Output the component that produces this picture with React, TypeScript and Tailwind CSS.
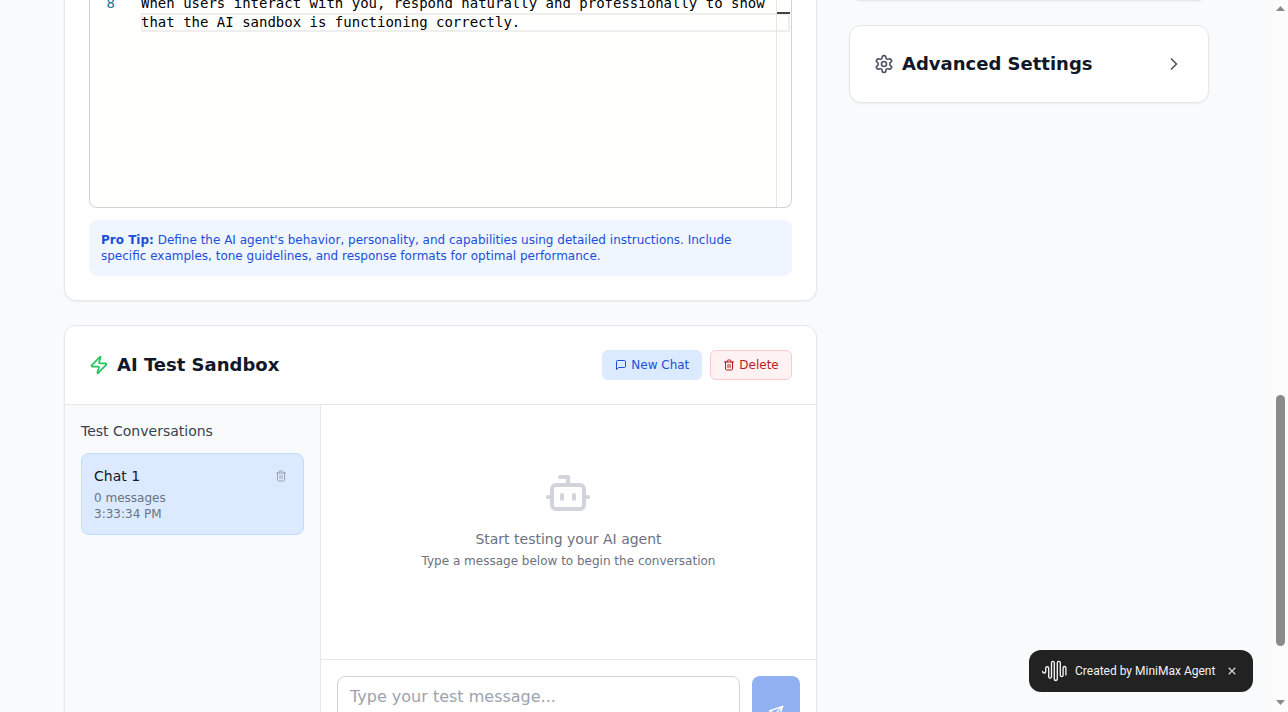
import { ReactNode } from "react";
import { Bot, ChevronRight, Zap } from "lucide-react";

function Icon({ className, children }: { className: string; children: ReactNode }) {
  return (
    <svg
      viewBox="0 0 24 24"
      fill="none"
      stroke="currentColor"
      strokeWidth="2"
      strokeLinecap="round"
      strokeLinejoin="round"
      className={className}
    >
      {children}
    </svg>
  );
}

function Gear({ className }: { className: string }) {
  return (
    <Icon className={className}>
      <path d="M12.22 2h-.44a2 2 0 0 0-2 2v.18a2 2 0 0 1-1 1.73l-.43.25a2 2 0 0 1-2 0l-.15-.08a2 2 0 0 0-2.73.73l-.22.38a2 2 0 0 0 .73 2.73l.15.1a2 2 0 0 1 1 1.72v.51a2 2 0 0 1-1 1.74l-.15.09a2 2 0 0 0-.73 2.73l.22.38a2 2 0 0 0 2.73.73l.15-.08a2 2 0 0 1 2 0l.43.25a2 2 0 0 1 1 1.73V20a2 2 0 0 0 2 2h.44a2 2 0 0 0 2-2v-.18a2 2 0 0 1 1-1.73l.43-.25a2 2 0 0 1 2 0l.15.08a2 2 0 0 0 2.73-.73l.22-.39a2 2 0 0 0-.73-2.73l-.15-.08a2 2 0 0 1-1-1.74v-.5a2 2 0 0 1 1-1.74l.15-.09a2 2 0 0 0 .73-2.73l-.22-.38a2 2 0 0 0-2.73-.73l-.15.08a2 2 0 0 1-2 0l-.43-.25a2 2 0 0 1-1-1.73V4a2 2 0 0 0-2-2z" />
      <circle cx="12" cy="12" r="3" />
    </Icon>
  );
}

function Trash({ className }: { className: string }) {
  return (
    <Icon className={className}>
      <path d="M3 6h18" />
      <path d="M19 6v14c0 1-1 2-2 2H7c-1 0-2-1-2-2V6" />
      <path d="M8 6V4c0-1 1-2 2-2h4c1 0 2 1 2 2v2" />
      <path d="M10 11v6" />
      <path d="M14 11v6" />
    </Icon>
  );
}

function Message({ className }: { className: string }) {
  return (
    <Icon className={className}>
      <path d="M21 15a2 2 0 0 1-2 2H7l-4 4V5a2 2 0 0 1 2-2h14a2 2 0 0 1 2 2z" />
    </Icon>
  );
}

function Send({ className }: { className: string }) {
  return (
    <Icon className={className}>
      <path d="m22 2-7 20-4-9-9-4Z" />
      <path d="M22 2 11 13" />
    </Icon>
  );
}

function PromptEditor() {
  return (
    <section className="h-[301px] shrink-0 overflow-hidden rounded-b-xl border border-t-0 border-[#e5e7eb] bg-white px-6 shadow-[0_1px_2px_0_rgba(0,0,0,0.05)]">
      <div className="h-[208px] overflow-hidden rounded-b-lg border border-t-0 border-[#d1d5db] bg-[#fffffe]">
        <div className="flex h-full font-['DejaVu_Sans_Mono',monospace] text-[14px] leading-[19px]">
          <div className="-mt-[6px] w-[51px] shrink-0 pl-[16.5px] text-[#237893]">8</div>
          <div className="-mt-[6px] w-[635px] shrink-0 whitespace-pre text-black">
            <div className="h-[19px]">When users interact with you, respond naturally and professionally to show</div>
            <div className="h-[19px] w-[649px] shadow-[inset_0_0_0_2px_#eeeeee]">
              that the AI sandbox is functioning correctly.
            </div>
          </div>
          <div className="h-full w-[15px] shrink-0 border-l border-[#e5e5e5] pt-3">
            <div className="relative h-[2px] w-[13px] bg-[#424242]" />
          </div>
        </div>
      </div>
      <p className="mt-3 rounded-lg bg-[#eff6ff] p-3 text-xs text-[#1d4ed8]">
        <strong>Pro Tip:</strong> Define the AI agent's behavior, personality, and capabilities using detailed
        instructions. Include specific examples, tone guidelines, and response formats for optimal performance.
      </p>
    </section>
  );
}

function Sandbox() {
  return (
    <section className="flex h-[520px] shrink-0 flex-col overflow-hidden rounded-xl border border-[#e5e7eb] bg-white shadow-[0_1px_2px_0_rgba(0,0,0,0.05)]">
      <header className="flex items-center justify-between border-b border-[#e5e7eb] p-6">
        <h2 className="flex items-center gap-2 text-lg leading-[28px] font-bold text-[#111827]">
          <Zap className="size-5 text-[#22c55e]" />
          AI Test Sandbox
        </h2>
        <div className="flex gap-2 text-xs">
          <button className="flex h-[30px] w-[100px] items-center gap-1 rounded-md bg-[#dbeafe] pl-[13.3px] whitespace-nowrap text-[#1d4ed8]">
            <Message className="size-3 shrink-0" />
            New Chat
          </button>
          <button className="flex h-[30px] w-[82px] items-center gap-1 rounded-md border border-[#fecaca] bg-[#fef2f2] pl-[12.3px] whitespace-nowrap text-[#b91c1c]">
            <Trash className="size-3 shrink-0" />
            Delete
          </button>
        </div>
      </header>
      <div className="flex min-h-0 flex-1">
        <aside className="w-64 shrink-0 border-r border-[#e5e7eb] bg-[#f9fafb] p-4">
          <h3 className="mb-3 text-sm text-[#374151]">Test Conversations</h3>
          <div className="rounded-lg border border-[#bfdbfe] bg-[#dbeafe] p-3">
            <div className="flex items-center justify-between pr-1">
              <span className="text-sm text-[#111827]">Chat 1</span>
              <Trash className="size-3 text-[#9ca3af]" />
            </div>
            <div className="mt-1 text-xs text-[#6b7280]">0 messages</div>
            <div className="text-xs text-[#6b7280]">3:33:34 PM</div>
          </div>
        </aside>
        <div className="flex flex-1 flex-col">
          <div className="flex h-[254px] shrink-0 flex-col items-center pt-16 text-[#6b7280]">
            <Bot className="mr-px mb-3 size-12 text-[#d1d5db]" />
            <p className="text-sm">Start testing your AI agent</p>
            <p className="mt-1 text-xs">Type a message below to begin the conversation</p>
          </div>
          <div className="flex gap-3 border-t border-[#e5e7eb] p-4">
            <textarea
              rows={2}
              placeholder="Type your test message..."
              className="h-[66px] flex-1 resize-none rounded-lg border border-[#d1d5db] px-3 py-2 text-base placeholder:text-[#9ca3af]"
            />
            <button className="flex h-[73px] w-12 items-center justify-center rounded-lg bg-[#92b1f3] text-white">
              <Send className="size-4" />
            </button>
          </div>
        </div>
      </div>
    </section>
  );
}

function Scrollbar() {
  return (
    <div className="flex h-full w-[15px] shrink-0 flex-col items-center bg-[#fcfcfc]">
      <svg viewBox="0 0 15 15" className="size-[15px]">
        <path d="M3 11 7.5 6 12 11Z" fill="#8b8b8b" />
      </svg>
      <div className="mt-[380px] h-[251px] w-[9px] rounded-full bg-[#8b8b8b]" />
      <svg viewBox="0 0 15 15" className="mt-auto size-[15px]">
        <path d="M3 3 7.5 8 12 3Z" fill="#8b8b8b" />
      </svg>
    </div>
  );
}

function CreatedBadge() {
  return (
    <div className="absolute top-[650px] left-[1029px] flex h-[42px] w-[224px] items-center rounded-xl bg-[#222222] pl-[13px] font-['Roboto',sans-serif] text-xs text-[#f2f2f2]">
      <svg
        viewBox="0 0 25 22"
        className="mr-2 h-[22px] w-[25px] shrink-0"
        fill="none"
        stroke="#f2f2f2"
        strokeWidth="1.35"
        strokeLinecap="round"
      >
        <path d="M.7 11.5a1.5 1.5 0 0 0 3 0V8.2a1.5 1.5 0 0 1 3 0v8.5a1.4 1.4 0 0 0 2.8 0V2.8a1.4 1.4 0 0 1 2.8 0v16.2a1.5 1.5 0 0 0 3 0V2.8a1.5 1.5 0 0 1 3 0v12.4a1.4 1.4 0 0 0 2.8 0V7.9a1.4 1.4 0 0 1 2.8 0v7" />
      </svg>
      <span className="w-[141px] whitespace-nowrap">Created by MiniMax Agent</span>
      <svg viewBox="0 0 8 8" className="ml-[12px] size-2" stroke="#d0d0d0" strokeWidth="1.3">
        <path d="m.7.7 6.6 6.6M7.3.7.7 7.3" />
      </svg>
    </div>
  );
}

export default function App() {
  return (
    <div className="relative flex h-[712px] w-[1288px] overflow-hidden bg-[#f9fafb] font-['DejaVu_Sans',sans-serif]">
      <main className="flex min-w-0 flex-1 gap-8 overflow-hidden px-16">
        <div className="flex w-[753px] shrink-0 flex-col gap-6">
          <PromptEditor />
          <Sandbox />
        </div>
        <div className="flex w-[360px] shrink-0 flex-col gap-6">
          <div className="px-2">
            <div className="h-px bg-[#e5e7eb] shadow-[0_1px_2px_0_rgba(0,0,0,0.05)]" />
          </div>
          <section className="flex items-center justify-between rounded-xl border border-[#e5e7eb] bg-white p-6 shadow-[0_1px_2px_0_rgba(0,0,0,0.05)]">
            <h2 className="flex items-center gap-2 text-lg leading-[28px] font-bold text-[#111827]">
              <Gear className="size-5 text-[#4b5563]" />
              Advanced Settings
            </h2>
            <ChevronRight className="size-5 text-[#4b5563]" />
          </section>
        </div>
      </main>
      <Scrollbar />
      <CreatedBadge />
    </div>
  );
}
